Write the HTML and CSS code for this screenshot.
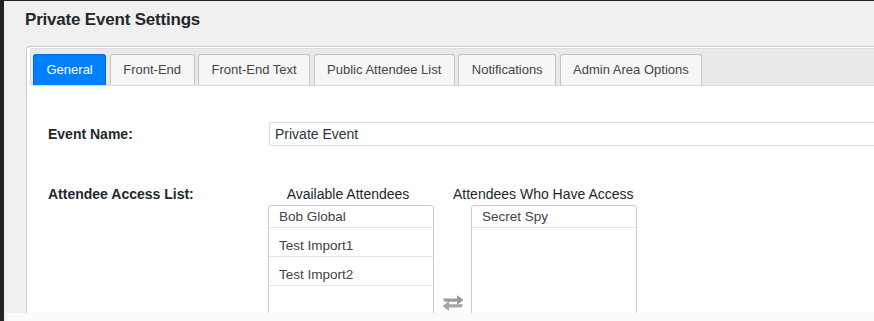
FILE: index.html
```html
<!DOCTYPE html>
<html lang="en">
<head>
    <meta charset="UTF-8">
    <meta name="viewport" content="width=device-width, initial-scale=1.0">
    <title>Private Event Settings</title>
    <link rel="stylesheet" href="styles.css">
</head>
<body>
    <div class="sidebar"></div>
    <div class="main">
        <div class="page">
            <h1 class="title">Private Event Settings</h1>
            <div class="settings-box">
                <ul class="tabs">
                    <li class="tab active">General</li>
                    <li class="tab">Front-End</li>
                    <li class="tab">Front-End Text</li>
                    <li class="tab">Public Attendee List</li>
                    <li class="tab">Notifications</li>
                    <li class="tab">Admin Area Options</li>
                </ul>
                <div class="tab-content">
                    <div class="form-row">
                        <label class="field-label" for="eventName">Event Name:</label>
                        <input type="text" id="eventName" class="text-input" value="Private Event">
                    </div>
                    <div class="form-row access-row">
                        <div class="field-label">Attendee Access List:</div>
                        <div class="access-grid">
                            <div class="list-title available-title">Available Attendees</div>
                            <div class="list-title access-title">Attendees Who Have Access</div>
                            <ul class="attendee-list">
                                <li>Bob Global</li>
                                <li>Test Import1</li>
                                <li>Test Import2</li>
                            </ul>
                            <div class="swap-col">
                                <svg class="swap-icon" width="22" height="16" viewBox="0 0 22 16">
                                    <path d="M1 3.5 H15 V0 L21.5 5 L15 10 V6.8 H2.5 Z" fill="#9a9a9a"/>
                                    <path d="M21 9.2 H7 V6 L0.5 11 L7 16 V12.5 H19.5 Z" fill="#a6a6a6"/>
                                </svg>
                            </div>
                            <ul class="attendee-list">
                                <li>Secret Spy</li>
                            </ul>
                        </div>
                    </div>
                </div>
            </div>
        </div>
        <div class="footer"></div>
    </div>
</body>
</html>
```

FILE: styles.css
```css
body {
    margin: 0;
    height: 321px;
    display: flex;
    overflow: hidden;
    background-color: #f0f0f0;
    font-family: "Liberation Sans", Arial, sans-serif;
    color: #23282d;
}
.sidebar {
    width: 4px;
    background-color: #1d2327;
}
.main {
    flex: 1;
    min-width: 0;
    display: flex;
    flex-direction: column;
}
.page {
    height: 312px;
    overflow: hidden;
    border-top: 1px solid #23282d;
    padding-left: 21px;
}
.footer {
    height: 8px;
    margin-left: 3px;
    background-color: #fbfbfb;
}
.title {
    margin: 9px 0 0;
    font-size: 17px;
    line-height: 20px;
    font-weight: bold;
    letter-spacing: -0.2px;
    color: #23282d;
}
.settings-box {
    margin: 16px 0 0 1px;
    padding: 1px 0 0 3px;
    border: 1px solid #cccccc;
    border-right: none;
    border-radius: 4px 0 0 0;
    background-color: #ffffff;
    height: 400px;
}
.tabs {
    display: flex;
    gap: 3.5px;
    margin: 0;
    padding: 5px 0 0 2px;
    list-style: none;
    background-color: #e9e9e9;
    border: 1px solid #dddddd;
    border-right: none;
    border-radius: 3px 0 0 3px;
}
.tab {
    height: 30px;
    padding: 0 12.5px;
    line-height: 30px;
    font-size: 13px;
    white-space: nowrap;
    color: #454545;
    background-color: #f6f6f6;
    border: 1px solid #c5c5c5;
    border-bottom: none;
    border-radius: 3px 3px 0 0;
}
.tab.active {
    color: #ffffff;
    background-color: #007fff;
    border-color: #0068e0;
}
.tab-content {
    padding: 36px 0 0 18px;
}
.form-row {
    display: flex;
    align-items: center;
}
.field-label {
    width: 220px;
    flex-shrink: 0;
    font-size: 14px;
    font-weight: bold;
    color: #23282d;
}
.text-input {
    flex-shrink: 0;
    margin-left: 1px;
    width: 700px;
    height: 24px;
    box-sizing: border-box;
    padding: 0 5px;
    border: 1px solid #dddddd;
    border-radius: 2px;
    font-family: "Liberation Sans", Arial, sans-serif;
    font-size: 14px;
    color: #2c3338;
}
.access-row {
    align-items: flex-start;
    margin-top: 39px;
}
.access-row .field-label {
    line-height: 18px;
}
.access-grid {
    display: grid;
    grid-template-columns: 166px 37px 166px;
}
.list-title {
    font-size: 14px;
    line-height: 18px;
    color: #23282d;
    white-space: nowrap;
}
.available-title {
    text-align: center;
    padding-right: 6px;
}
.access-title {
    grid-column: 2 / 4;
    padding-left: 19px;
}
.attendee-list {
    margin: 2px 0 0;
    padding: 0;
    list-style: none;
    height: 140px;
    border: 1px solid #cccccc;
    border-radius: 3px;
    background-color: #ffffff;
}
.attendee-list li {
    padding: 7px 10px 0;
    line-height: 21px;
    font-size: 13.5px;
    color: #3c434a;
    border-bottom: 1px solid #e6e6e6;
}
.attendee-list li:first-child {
    padding-top: 0;
}
.swap-col {
    display: flex;
    justify-content: center;
    padding-top: 92px;
}
.swap-icon {
    display: block;
}
```
